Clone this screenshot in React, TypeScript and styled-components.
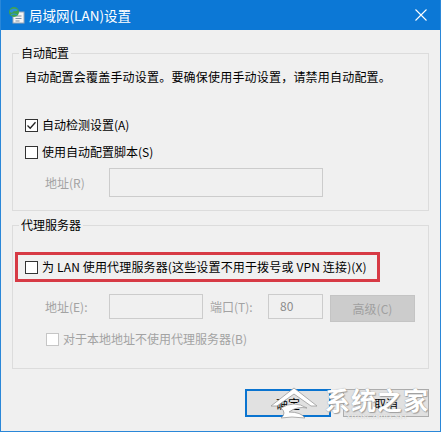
import React from "react";
import styled, { createGlobalStyle } from "styled-components";

const Global = createGlobalStyle`
  html, body { margin: 0; padding: 0; background: #ffffff; }
  body { font-family: "Noto Sans CJK SC", "Noto Sans", sans-serif; font-size: 12px; }
  * { box-sizing: border-box; }
`;

const Window = styled.div`
  position: relative;
  width: 441px;
  height: 432px;
  border: 1px solid #2a87d8;
  border-top: none;
  background: #f0f0f0;
  display: flex;
  flex-direction: column;
  overflow: hidden;
`;

const TitleBar = styled.div`
  height: 30px;
  margin: 0 -1px;
  background: #0c78d6;
  display: flex;
  align-items: center;
  padding: 0 0 0 8px;
  color: #ffffff;
`;

const TitleText = styled.span`
  margin-left: 4px;
  font-size: 13.5px;
  line-height: 18px;
  flex: 1;
`;

const CloseBtn = styled.div`
  width: 46px;
  height: 30px;
  display: flex;
  align-items: center;
  justify-content: center;
  padding-left: 6px;
`;

const Body = styled.div`
  flex: 1;
  display: flex;
  flex-direction: column;
  padding: 15px 11px 0 11px;
`;

const Group = styled.fieldset<{ $mt?: number }>`
  margin: ${(p) => p.$mt ?? 0}px 0 0 0;
  padding: 0;
  min-width: 0;
  border: 1px solid #dcdcdc;
`;

const Legend = styled.legend`
  margin-left: 6px;
  padding: 0 2px;
  font-size: 12px;
  line-height: 16px;
  color: #000;
`;

const GroupContent = styled.div<{ $pb: number }>`
  display: flex;
  flex-direction: column;
  align-items: flex-start;
  padding: 0 11px ${(p) => p.$pb}px 12px;
`;

const Desc = styled.div<{ $mt: number }>`
  margin-top: ${(p) => p.$mt}px;
  font-size: 12px;
  line-height: 16px;
  color: #000;
  letter-spacing: 0.2px;
`;

const CheckRow = styled.label<{ $mt: number; $indent?: number; $disabled?: boolean; $ls?: number }>`
  margin-top: ${(p) => p.$mt}px;
  margin-left: ${(p) => p.$indent ?? 0}px;
  display: flex;
  align-items: center;
  height: 16px;
  font-size: 12px;
  line-height: 16px;
  white-space: nowrap;
  letter-spacing: ${(p) => p.$ls ?? 0}px;
  color: ${(p) => (p.$disabled ? "#a3a3a3" : "#000")};
`;

const Box = styled.span<{ $disabled?: boolean }>`
  width: 13px;
  height: 13px;
  margin-right: 4px;
  border: 1px solid ${(p) => (p.$disabled ? "#c6c6c6" : "#333333")};
  background: #ffffff;
  display: flex;
  align-items: center;
  justify-content: center;
  flex-shrink: 0;
`;

const Highlight = styled.div`
  margin: 19px 0 0 -10px;
  border: 3px solid #d73a45;
  padding: 4px 10px 4px 7px;
`;

const FieldRow = styled.div<{ $mt: number }>`
  margin-top: ${(p) => p.$mt}px;
  padding-left: 20px;
  display: flex;
  align-items: flex-start;
`;

const FieldLabel = styled.span<{ $w: number; $top: number; $ml?: number }>`
  width: ${(p) => p.$w}px;
  margin-left: ${(p) => p.$ml ?? 0}px;
  padding-top: ${(p) => p.$top}px;
  font-size: 12px;
  line-height: 16px;
  color: #a3a3a3;
  white-space: nowrap;
`;

const Input = styled.div<{ $w: number; $h: number }>`
  width: ${(p) => p.$w}px;
  height: ${(p) => p.$h}px;
  border: 1px solid #cccccc;
  background: #f0f0f0;
  font-size: 12px;
  line-height: 16px;
  color: #8c8c8c;
  padding: 3px 0 0 11px;
`;

const GrayButton = styled.div`
  width: 85px;
  height: 27px;
  margin: 1px 0 0 7px;
  background: #cccccc;
  border: 1px solid #c4c4c4;
  color: #a0a0a0;
  font-size: 12px;
  display: flex;
  align-items: center;
  justify-content: center;
`;

const ButtonRow = styled.div`
  margin-top: 20px;
  display: flex;
  justify-content: flex-end;
  gap: 12px;
`;

const DlgButton = styled.div<{ $primary?: boolean }>`
  width: 86px;
  height: 28px;
  background: #e1e1e1;
  border: ${(p) => (p.$primary ? "2px solid #0a74d0" : "1px solid #adadad")};
  color: #000;
  font-size: 12px;
  display: flex;
  align-items: center;
  justify-content: center;
`;

const Watermark = styled.div`
  position: absolute;
  left: 266px;
  top: 382px;
  display: flex;
  align-items: center;
  gap: 4px;
  pointer-events: none;
`;

const WatermarkText = styled.div`
  display: flex;
  flex-direction: column;
  align-items: center;
`;

const WmBig = styled.span`
  font-family: "Noto Sans CJK SC", sans-serif;
  font-size: 25px;
  line-height: 30px;
  font-weight: 700;
  color: #ffffff;
  letter-spacing: 1px;
  text-shadow: 0 0 1px #8a8a8a, 1px 1px 1px #a0a0a0;
`;

const WmSmall = styled.span`
  font-family: "Liberation Serif", serif;
  font-size: 6px;
  line-height: 7px;
  color: #ffffff;
  letter-spacing: 0.4px;
  text-shadow: 0 0 1px #999;
`;

const CheckBox: React.FC<{ checked?: boolean; disabled?: boolean }> = ({ checked, disabled }) => (
  <Box $disabled={disabled}>
    {checked && (
      <svg width="11" height="11" viewBox="0 0 11 11">
        <path d="M1.5 5.5 L4.2 8.2 L9.5 2.2" fill="none" stroke="#222" strokeWidth="1.3" />
      </svg>
    )}
  </Box>
);

const TitleIcon = () => (
  <svg width="17" height="18" viewBox="0 0 17 18">
    <rect x="5" y="6" width="11" height="11" fill="#f4f4f4" stroke="#9aa8b8" strokeWidth="1" />
    <path d="M7.5 10 h6 M7.5 12.5 h6 M7.5 15 h4" stroke="#7f8fa3" strokeWidth="1" />
    <circle cx="6" cy="6" r="5" fill="#3fa34d" />
    <path d="M2 4 Q6 1 10 4 Q8 6 6 5 Q4 8 2 6 Z" fill="#2f8fd8" />
    <path d="M3 9 Q6 7 9 9" fill="none" stroke="#2f8fd8" strokeWidth="1.2" />
  </svg>
);

export default function App() {
  return (
    <>
      <Global />
      <Window>
        <TitleBar>
          <TitleIcon />
          <TitleText>局域网(LAN)设置</TitleText>
          <CloseBtn>
            <svg width="12" height="12" viewBox="0 0 12 12">
              <path d="M0.5 0.5 L11.5 11.5 M11.5 0.5 L0.5 11.5" stroke="#ffffff" strokeWidth="1.1" />
            </svg>
          </CloseBtn>
        </TitleBar>
        <Body>
          <Group>
            <Legend>自动配置</Legend>
            <GroupContent $pb={13}>
              <Desc $mt={8}>自动配置会覆盖手动设置。要确保使用手动设置，请禁用自动配置。</Desc>
              <CheckRow $mt={32}>
                <CheckBox checked />
                自动检测设置(A)
              </CheckRow>
              <CheckRow $mt={11}>
                <CheckBox />
                使用自动配置脚本(S)
              </CheckRow>
              <FieldRow $mt={8}>
                <FieldLabel $w={64} $top={7}>地址(R)</FieldLabel>
                <Input $w={214} $h={29} />
              </FieldRow>
            </GroupContent>
          </Group>
          <Group $mt={6}>
            <Legend>代理服务器</Legend>
            <GroupContent $pb={21}>
              <Highlight>
                <CheckRow $mt={0} $ls={0.15}>
                  <CheckBox />
                  为 LAN 使用代理服务器(这些设置不用于拨号或 VPN 连接)(X)
                </CheckRow>
              </Highlight>
              <FieldRow $mt={12}>
                <FieldLabel $w={64} $top={5}>地址(E):</FieldLabel>
                <Input $w={94} $h={25} />
                <FieldLabel $w={58} $ml={7} $top={5}>端口(T):</FieldLabel>
                <Input $w={55} $h={25}>80</Input>
                <GrayButton>高级(C)</GrayButton>
              </FieldRow>
              <CheckRow $mt={9} $indent={21} $disabled>
                <CheckBox disabled />
                对于本地地址不使用代理服务器(B)
              </CheckRow>
            </GroupContent>
          </Group>
          <ButtonRow>
            <DlgButton $primary>确定</DlgButton>
            <DlgButton>取消</DlgButton>
          </ButtonRow>
        </Body>
        <Watermark>
          <svg width="54" height="40" viewBox="0 0 54 40">
            <path d="M4 24 L27 6 L50 24 L44 24 L27 12 L10 24 Z" fill="#ffffff" stroke="#9a9a9a" strokeWidth="0.8" />
            <path d="M14 26 Q27 18 40 26 Q30 24 22 30 Q34 30 38 36 Q24 34 14 36 Q20 31 14 26 Z" fill="#ffffff" stroke="#9a9a9a" strokeWidth="0.8" />
          </svg>
          <WatermarkText>
            <WmBig>系统之家</WmBig>
            <WmSmall>XITONGZHIJIA.NET</WmSmall>
          </WatermarkText>
        </Watermark>
      </Window>
    </>
  );
}
